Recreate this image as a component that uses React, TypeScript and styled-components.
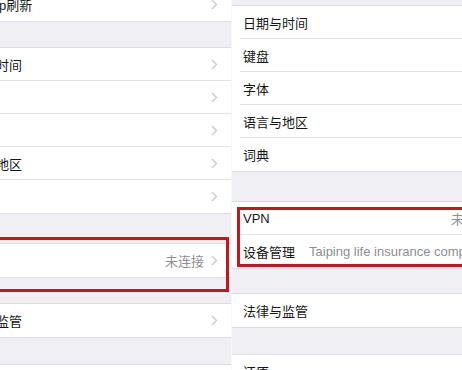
import React from 'react'
import styled, { createGlobalStyle } from 'styled-components'

const GlobalStyle = createGlobalStyle`
  html, body {
    margin: 0;
    padding: 0;
    background: #ffffff;
    overflow: hidden;
  }
  body {
    font-family: "Liberation Sans", "Noto Sans CJK SC", sans-serif;
  }
`

type Item = { label: string; value?: string }

const Chevron = () => (
  <StyledChevron width="7" height="11" viewBox="0 0 7 11">
    <polyline points="1,1 5.5,5.5 1,10" fill="none" stroke="#c7c7cc" strokeWidth="1.3" />
  </StyledChevron>
)

const Group = ({ items }: { items: Item[] }) => (
  <StyledGroup>
    {items.map((item, i) => (
      <StyledRow key={item.label}>
        <StyledRowBody $last={i === items.length - 1}>
          <StyledLabel>{item.label}</StyledLabel>
          {item.value && <StyledValue>{item.value}</StyledValue>}
          <Chevron />
        </StyledRowBody>
      </StyledRow>
    ))}
  </StyledGroup>
)

const general: Item[] = [
  { label: '日期与时间' },
  { label: '键盘' },
  { label: '字体' },
  { label: '语言与地区' },
  { label: '词典' },
]

const App = () => {
  return (
    <>
      <GlobalStyle />
      <StyledPage>
        <StyledLeftPanel>
          <StyledLeftInner>
            <Group items={[{ label: '后台App刷新' }]} />
            <StyledGap $h={25} />
            <Group items={general} />
            <StyledGap $h={29} />
            <Group items={[{ label: 'VPN', value: '未连接' }]} />
            <StyledGap $h={25} />
            <Group items={[{ label: '法律与监管' }]} />
            <StyledGap $h={26} />
            <Group items={[{ label: '还原' }]} />
          </StyledLeftInner>
          <StyledMark $top={237} $left={-4} $width={233} $height={55} />
        </StyledLeftPanel>
        <StyledRightPanel>
          <StyledGap $h={5} />
          <Group items={general} />
          <StyledGap $h={29} />
          <Group
            items={[
              { label: 'VPN', value: '未连接' },
              { label: '设备管理', value: 'Taiping life insurance company limited' },
            ]}
          />
          <StyledGap $h={24} />
          <Group items={[{ label: '法律与监管' }]} />
          <StyledGap $h={26} />
          <Group items={[{ label: '还原' }]} />
          <StyledMark $top={207} $left={5} $width={290} $height={60} />
        </StyledRightPanel>
      </StyledPage>
    </>
  )
}

export default App

const StyledPage = styled.div`
  width: 462px;
  height: 370px;
  display: flex;
  overflow: hidden;
  background: #ffffff;
`

const StyledLeftPanel = styled.div`
  position: relative;
  width: 231px;
  flex-shrink: 0;
  overflow: hidden;
  background: #efeff4;
`

const StyledLeftInner = styled.div`
  width: 285px;
  margin-left: -54px;
  margin-top: -13px;
`

const StyledRightPanel = styled.div`
  position: relative;
  width: 285px;
  flex-shrink: 0;
  background: #efeff4;
  border-left: 1px solid #f7f7f9;
`

const StyledGap = styled.div<{ $h: number }>`
  height: ${p => p.$h}px;
`

const StyledGroup = styled.div`
  background: #ffffff;
  border-top: 1px solid #dddde1;
  border-bottom: 1px solid #dddde1;
`

const StyledRow = styled.div`
  height: 33px;
  padding-left: 8px;
  display: flex;
`

const StyledRowBody = styled.div<{ $last: boolean }>`
  flex: 1;
  min-width: 0;
  display: flex;
  align-items: center;
  padding: 0 13px 0 3px;
  border-bottom: ${p => (p.$last ? 'none' : '1px solid #e3e3e6')};
  font-size: 13px;
  color: #161616;
`

const StyledLabel = styled.span`
  flex-shrink: 0;
  white-space: nowrap;
`

const StyledValue = styled.span`
  flex: 1;
  min-width: 0;
  padding: 0 7px 0 14px;
  text-align: right;
  white-space: nowrap;
  overflow: hidden;
  text-overflow: ellipsis;
  color: #8e8e93;
`

const StyledChevron = styled.svg`
  flex-shrink: 0;
  margin-left: auto;
`

const StyledMark = styled.div<{ $top: number; $left: number; $width: number; $height: number }>`
  position: absolute;
  top: ${p => p.$top}px;
  left: ${p => p.$left}px;
  width: ${p => p.$width}px;
  height: ${p => p.$height}px;
  box-sizing: border-box;
  border: 3px solid #c8141c;
  pointer-events: none;
`
